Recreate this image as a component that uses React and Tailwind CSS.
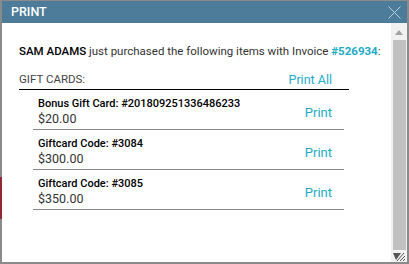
export default function App() {
  const items = [
    { title: "Bonus Gift Card: #201809251336486233", amount: "$20.00" },
    { title: "Giftcard Code: #3084", amount: "$300.00" },
    { title: "Giftcard Code: #3085", amount: "$350.00" },
  ];

  return (
    <div className="w-[409px] h-[264px] flex bg-[#8a8a8a] overflow-hidden font-['Roboto',sans-serif]">
      {/* left edge of page behind the dialog */}
      <div className="w-[2px] flex flex-col shrink-0">
        <div className="h-[177px] bg-[#8a8a8a]" />
        <div className="h-[42px] bg-[#8e2b35]" />
      </div>

      <div className="w-[405px] h-[261px] mt-[1px] flex flex-col bg-white">
        {/* title bar */}
        <div className="h-[22px] shrink-0 bg-[#4c7c99] flex items-center justify-between pl-[9px] pr-[6px]">
          <span className="text-white text-[12.5px] font-medium leading-none">PRINT</span>
          <svg width="13" height="13" viewBox="0 0 13 13" className="text-[#b9cfdc]">
            <path d="M0.5 0.5 L12.5 12.5 M12.5 0.5 L0.5 12.5" stroke="currentColor" strokeWidth="1" />
          </svg>
        </div>

        <div className="flex-1 flex min-h-0">
          {/* content */}
          <div className="w-[389px] pl-[17px] pt-[21px] text-[11px] text-[#333]">
            <p className="leading-[15px] text-[11.5px] whitespace-nowrap">
              <span className="font-medium text-black">SAM ADAMS</span> just purchased the following items with Invoice{" "}
              <span className="font-bold text-[#20abc6]">#526934</span>:
            </p>

            <div className="w-[330px] mt-[13px] flex justify-between items-end border-b border-black pb-[2px]">
              <span className="leading-[15px] text-[11.5px] text-[#444]">GIFT CARDS:</span>
              <span className="leading-[15px] text-[12.5px] text-[#20abc6] mr-[17px]">Print All</span>
            </div>

            <div className="ml-[14px] w-[311px]">
              {items.map((it) => (
                <div key={it.title} className="h-[40px] flex border-b border-[#888] pl-[5px] pr-[12px]">
                  <div className="flex-1 pt-[6px]">
                    <div className="leading-[15px] font-medium text-black">{it.title}</div>
                    <div className="leading-[16px] text-[12.5px] text-[#333]">{it.amount}</div>
                  </div>
                  <div className="pt-[15px] leading-[15px] text-[13px] text-[#20abc6]">Print</div>
                </div>
              ))}
            </div>
          </div>

          {/* scrollbar */}
          <div className="w-[16px] bg-[#f1f1f1] flex flex-col items-center">
            <svg width="8" height="5" viewBox="0 0 8 5" className="mt-[7px]">
              <path d="M4 0 L8 5 L0 5 Z" fill="#a3a3a3" />
            </svg>
            <div className="w-[13px] h-[210px] mt-[5px] bg-[#c1c1c1]" />
            <svg width="12" height="10" viewBox="0 0 12 10" className="mt-[1px] self-end mr-[2px]">
              <path d="M0 2 L8 2 L3 9 Z" fill="#555" />
              <path d="M11 2 L4 10 M12 5 L7 10 M12 8 L10 10" stroke="#555" strokeWidth="1" />
            </svg>
          </div>
        </div>
      </div>

      <div className="w-[2px] bg-[#8a8a8a] shrink-0" />
    </div>
  );
}
